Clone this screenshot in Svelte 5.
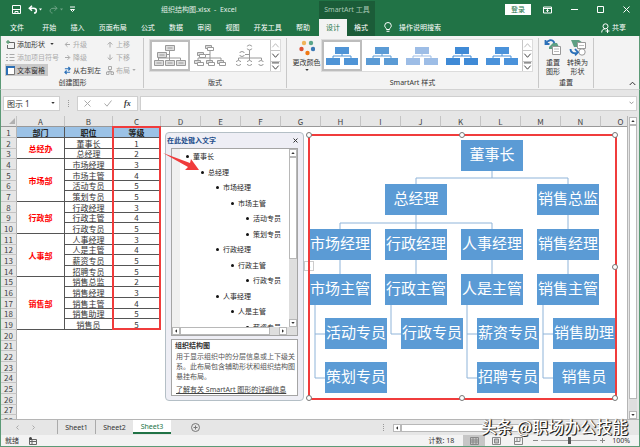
<script>
    const tabs = ["开始", "插入", "页面布局", "公式", "数据", "审阅", "视图", "开发工具", "帮助"];
    const letters = "DEFGHIJKLMNO".split("");
    const sheets = ["Sheet1", "Sheet2", "Sheet3"];
    let activeSheet = $state("Sheet3");
    let zoomLevel = $state(50);

    // Table data: department is set on the first row of each merged block
    const staff = [
        { dept: "总经办", span: 2, job: "董事长", level: 1 },
        { job: "总经理", level: 2 },
        { dept: "市场部", span: 4, job: "市场经理", level: 3 },
        { job: "市场主管", level: 4 },
        { job: "活动专员", level: 5 },
        { job: "策划专员", level: 5 },
        { dept: "行政部", span: 3, job: "行政经理", level: 3 },
        { job: "行政主管", level: 4 },
        { job: "行政专员", level: 5 },
        { dept: "人事部", span: 4, job: "人事经理", level: 3 },
        { job: "人是主管", level: 4 },
        { job: "薪资专员", level: 5 },
        { job: "招聘专员", level: 5 },
        { dept: "销售部", span: 5, job: "销售总监", level: 2 },
        { job: "销售经理", level: 3 },
        { job: "销售主管", level: 4 },
        { job: "销售助理", level: 5 },
        { job: "销售员", level: 5 },
    ];
    const emptyRows = [20, 21, 22, 23, 24, 25, 26, 27, 28];

    const outline = [
        [1, "董事长"],
        [2, "总经理"],
        [3, "市场经理"],
        [4, "市场主管"],
        [5, "活动专员"],
        [5, "策划专员"],
        [3, "行政经理"],
        [4, "行政主管"],
        [5, "行政专员"],
        [3, "人事经理"],
        [4, "人是主管"],
        [5, "薪资专员"],
    ];

    // Org chart nodes, x / y inside the drawing
    const nodes = [
        [153, 6, "董事长"],
        [77, 50, "总经理"],
        [229, 50, "销售总监"],
        [1, 95, "市场经理"],
        [77, 95, "行政经理"],
        [153, 95, "人事经理"],
        [229, 95, "销售经理"],
        [1, 140, "市场主管"],
        [77, 140, "行政主管"],
        [153, 140, "人是主管"],
        [229, 140, "销售主管"],
        [17, 184, "活动专员"],
        [93, 184, "行政专员"],
        [169, 184, "薪资专员"],
        [245, 184, "销售助理"],
        [17, 228, "策划专员"],
        [169, 228, "招聘专员"],
        [245, 228, "销售员"],
    ];
    const handles = [[1, 1], [154, 1], [307, 1], [307, 133], [1, 264], [154, 264], [307, 264]];
    const styles = ["#4f94d6", "#5b9bd5", "#9dbde6", "#3f8ad6", "#4a92da"];
</script>

{#snippet caret()}
    <svg class="caret" viewBox="0 0 5 3" aria-hidden="true"><path d="M0 0h5L2.5 3z" /></svg>
{/snippet}

{#snippet galleryScroll()}
    <div class="gallery-scroll">
        <button aria-label="上一行"><svg viewBox="0 0 10 10"><path class="dim" d="M1.500 7l3.500-4 3.500 4" /></svg></button>
        <button aria-label="下一行"><svg viewBox="0 0 10 10"><path d="M1.500 3l3.500 4 3.500-4" /></svg></button>
        <button aria-label="其他"><svg viewBox="0 0 10 10"><path d="M1 1h8M1.500 4l3.500 4 3.500-4" /></svg></button>
    </div>
{/snippet}

<div class="app">
    <header>
        <div class="title-left">
            <div class="quick">
                <button aria-label="保存">
                    <svg width="9" height="9" viewBox="0 0 9 9"><path d="M.5.5h8v8h-8zM.5 4.500h8M3 8.500v-2h3v2" /></svg>
                </button>
                <button aria-label="撤消">
                    <svg width="14" height="9" viewBox="0 0 14 9"><path stroke-width="1.500" d="M4 .8L1.300 3.300 4 5.800M1.300 3.300h4.200c4 0 3.500 4.700.5 4.700" /><path class="fill" d="M11 3.500h3L12.500 5.500z" /></svg>
                </button>
                <button class="off" aria-label="恢复">
                    <svg width="14" height="9" viewBox="0 0 14 9"><path d="M5.500.8L8 3.300 5.500 5.800M8 3.300H4c-4 0-3.500 4.700-.5 4.700" /><path class="fill" d="M11 3.500h3L12.500 5.500z" /></svg>
                </button>
                <button aria-label="自定义快速访问工具栏">
                    <svg width="5" height="7" viewBox="0 0 5 7"><path d="M0 1h5M.5 3.500h4L2.500 5.500z" /></svg>
                </button>
            </div>
            <h1>组织结构图.xlsx&nbsp; -&nbsp; Excel</h1>
        </div>
        <div class="context-title">SmartArt 工具</div>
        <div class="title-right">
            <button class="login">登录</button>
            <button aria-label="功能区显示选项"><svg width="9" height="8" viewBox="0 0 9 8"><path d="M.5 1h8v6h-8zM.5 2.500h8M4.500 6V3.500M3.300 4.700l1.200-1.200 1.200 1.200" /></svg></button>
            <button aria-label="最小化"><svg width="7" height="7" viewBox="0 0 7 7"><path d="M0 3.500h7" /></svg></button>
            <button aria-label="最大化"><svg width="7" height="7" viewBox="0 0 7 7"><path d="M.5.5h6v6h-6z" /></svg></button>
            <button aria-label="关闭"><svg width="7" height="7" viewBox="0 0 7 7"><path d="M.5.5l6 6M6.500.5l-6 6" /></svg></button>
        </div>
        <nav class="tabs">
            <button class="file">文件</button>
            {#each tabs as tab}
                <button>{tab}</button>
            {/each}
        </nav>
        <nav class="context-tabs">
            <button class="active">设计</button>
            <button>格式</button>
        </nav>
        <div class="tabs-right">
            <button>
                <svg width="8" height="11" viewBox="0 0 8 11"><path d="M2.500 7.500C2.500 6 .7 5.500.7 3.700a3.300 3.200 0 0 1 6.600 0C7.300 5.500 5.500 6 5.500 7.500zM2.500 9.300h3" /></svg>
                操作说明搜索
            </button>
            <button class="share">
                <svg width="9" height="10" viewBox="0 0 9 10"><circle cx="4.500" cy="3.300" r="2.500" /><path d="M.7 9.500c0-2.500 1.500-3.700 3.800-3.700M6.500 6v4M4.500 8h4" /></svg>
                共享
            </button>
        </div>
    </header>

    <section class="ribbon">
        <div class="group create">
            <div class="content">
                <div class="commands">
                    <button>
                        <svg width="9" height="9" viewBox="0 0 9 9"><path stroke="#666" d="M3 2.500h5.500v6h-7V5" /><path stroke="#3c8a5a" d="M2 0v4M0 2h4" /></svg>
                        添加形状 <span class="gap"></span>{@render caret()}
                    </button>
                    <button disabled>
                        <svg width="9" height="9" viewBox="0 0 9 9"><path stroke="#aaa" d="M0 1.500h2M0 4.500h2M0 7.500h2M3.500 1.500h5M3.500 4.500h5M3.500 7.500h5" /></svg>
                        添加项目符号
                    </button>
                    <button class="pressed">
                        <svg width="9" height="9" viewBox="0 0 9 9"><path fill="#fff" stroke="#777" d="M.5.5h8v8h-8z" /><path stroke="#2b6fb5" stroke-width="2" d="M0 1h9M1 1v8" /></svg>
                        文本窗格
                    </button>
                </div>
                <div class="commands">
                    <button disabled><svg width="7" height="7" viewBox="0 0 7 7"><path stroke="#aaa" d="M6 3.500H1.500M3.500 1.200L1.200 3.500l2.300 2.300" /></svg>升级</button>
                    <button disabled><svg width="7" height="7" viewBox="0 0 7 7"><path stroke="#aaa" d="M1 3.500h4.500M3.500 1.200l2.300 2.300-2.300 2.300" /></svg>降级</button>
                    <button><svg width="7" height="9" viewBox="0 0 8 9"><path stroke="#2b70b8" stroke-width="1.300" d="M1 2.500h6M5 .5l2 2-2 2M7 6.500H1M3 4.500l-2 2 2 2" /></svg>从右到左</button>
                </div>
                <div class="commands">
                    <button disabled><svg width="8" height="7" viewBox="0 0 8 7"><path stroke="#aaa" d="M4 6.500v-5M1.700 3.500L4 1.200l2.300 2.300" /></svg>上移</button>
                    <button disabled><svg width="8" height="7" viewBox="0 0 8 7"><path stroke="#aaa" d="M4 .5v5M1.700 3.500L4 5.800l2.300-2.300" /></svg>下移</button>
                    <button disabled><svg width="8" height="9" viewBox="0 0 8 9"><path stroke="#aaa" d="M2.500.5h3v3h-3zM4 3.500v2M1.500 5.500h5M.5 6h2.500v2.500H.5zM5 6h2.500v2.500H5z" /></svg>布局 {@render caret()}</button>
                </div>
            </div>
            <h2>创建图形</h2>
        </div>

        <div class="group">
            <div class="content">
                <div class="gallery">
                    <button class="item selected" aria-label="组织结构图">
                        <svg viewBox="0 0 40 32"><path d="M19.500 10v10M16 14.500h3.500M8.500 20v-2h22v2" /><g class="gray"><path d="M15.500 5.500h9v5h-9zM7.500 12.500h9v5h-9zM4.500 20.500h9v5h-9zM15.500 20.500h9v5h-9zM26.500 20.500h9v5h-9z" /></g><path d="M17.500 8h5M9.500 15h5M6.500 23h5M17.500 23h5M28.500 23h5" /></svg>
                    </button>
                    <button class="item" aria-label="姓名和职务组织结构图">
                        <svg viewBox="0 0 40 32"><path d="M20 10v10M16 14.500h4M8 20v-2h23v2" /><g class="gray"><path d="M15.500 5.500h6v3h-6zM7.500 12.500h6v3h-6zM4.500 20.500h6v3h-6zM16.500 20.500h6v3h-6zM27.500 20.500h6v3h-6z" /></g><g class="white"><path d="M17.500 7.500h6v3h-6zM9.500 14.500h6v3h-6zM7.500 22.500h6v3h-6zM18.500 22.500h6v3h-6zM29.500 22.500h6v3h-6z" /></g></svg>
                    </button>
                    <button class="item" aria-label="半圆组织结构图">
                        <svg viewBox="0 0 40 32"><path d="M19.500 10v10M14 14.500h5.500M8.500 20v-2h23v2" /><g class="white"><circle cx="19.500" cy="7.500" r="2.500" /><circle cx="12" cy="14" r="2.500" /><circle cx="8.500" cy="23" r="2.500" /><circle cx="19.500" cy="23" r="2.500" /><circle cx="31" cy="23" r="2.500" /></g><path class="wipe" d="M16 7.500h7M9 14h6M5 23h7M16 23h7M27 23h7" /></svg>
                    </button>
                    {@render galleryScroll()}
                </div>
            </div>
            <h2>版式</h2>
        </div>

        <div class="group">
            <div class="content">
                <button class="big colors">
                    <svg width="16" height="16" viewBox="0 0 16 16"><circle cx="5" cy="3" r="2.200" fill="#f0b45a" /><circle cx="12" cy="3" r="2.200" fill="#5aa58a" /><circle cx="2.500" cy="9" r="2.200" fill="#dc5032" /><circle cx="14" cy="9" r="2.200" fill="#3c78b4" /><circle cx="8.500" cy="13" r="2.200" fill="#f07814" /></svg>
                    <span>更改颜色</span>
                    {@render caret()}
                </button>
                <div class="gallery">
                    {#each styles as color, i}
                        <button class="item" class:selected={i == 0} aria-label="样式 {i + 1}">
                            <svg viewBox="0 0 40 32"><path stroke={color} d="M20 14v2M11 18v-2h18v2" /><path fill={color} d="M13 7h14v7H13zM4 18h14v7H4zM22 18h14v7H22z" /></svg>
                        </button>
                    {/each}
                    {@render galleryScroll()}
                </div>
            </div>
            <h2>SmartArt 样式</h2>
        </div>

        <div class="group">
            <div class="content reset">
                <button class="big">
                    <svg width="18" height="17" viewBox="0 0 18 17"><path fill="#5fa083" d="M5 8l4-4h4l3 6H5z" /><path fill="#fff" stroke="#999" d="M8.500 7.500h8v8h-8z" /><path stroke="#bbb" d="M10 10h5M10 12.500h5" /><path stroke="#2b70b8" stroke-width="1.800" d="M1.500 1v4h4M2 4.500C4 1 8-.5 10.500 4" /></svg>
                    <span>重置<br />图形</span>
                </button>
                <button class="big">
                    <svg width="18" height="17" viewBox="0 0 18 17"><path fill="#5fa083" d="M2 1h8l4 3-5 4H5z" /><path fill="#fff" stroke="#999" d="M8.500 3.500h8v6h-8z" /><path stroke="#bbb" d="M10 6.500h5" /><circle cx="13" cy="13" r="3.200" fill="#fff" stroke="#999" /><path stroke="#2b70b8" stroke-width="1.800" d="M1.500 10c0 4 4 5 7 3.500M6 10l3 3.300L6 16.300" /></svg>
                    <span>转换为<br />形状</span>
                </button>
            </div>
            <h2>重置</h2>
        </div>
        <button class="collapse" aria-label="折叠功能区"><svg width="7" height="5" viewBox="0 0 7 5"><path d="M.7 4l2.800-2.800L6.300 4" /></svg></button>
    </section>

    <section class="formula">
        <div class="name-box">
            <select aria-label="名称框"><option>图示 1</option></select>
            {@render caret()}
        </div>
        <span class="dots"></span>
        <div class="fx">
            <button aria-label="取消"><svg width="7" height="7" viewBox="0 0 7 7"><path stroke="#aaa" d="M.5.5l6 6M6.500.5l-6 6" /></svg></button>
            <button aria-label="输入"><svg width="8" height="7" viewBox="0 0 8 7"><path stroke="#aaa" d="M.5 3.500l2.500 2.700L7.500.5" /></svg></button>
            <button class="fn"><i>fx</i></button>
        </div>
        <div class="formula-input">
            <input type="text" aria-label="编辑栏" />
            <svg width="5" height="4" viewBox="0 0 5 4"><path d="M.5.7l2 2 2-2" /></svg>
        </div>
    </section>

    <main>
        <div class="sheet">
            <table>
                <colgroup>
                    <col class="num" />
                    <col class="wide" /><col class="wide" /><col class="wide" />
                    {#each letters as letter}<col class="narrow" />{/each}
                </colgroup>
                <thead>
                    <tr>
                        <th class="corner"><svg width="6" height="6" viewBox="0 0 6 6"><path d="M6 0v6H0z" /></svg></th>
                        <th>A</th><th>B</th><th>C</th>
                        {#each letters as letter}<th>{letter}</th>{/each}
                    </tr>
                </thead>
                <tbody>
                    <tr class="head">
                        <th>1</th><td>部门</td><td>职位</td><td>等级</td>
                    </tr>
                    {#each staff as row, i}
                        <tr>
                            <th>{i + 2}</th>
                            {#if row.dept}<td class="dept" rowspan={row.span}>{row.dept}</td>{/if}
                            <td>{row.job}</td>
                            <td>{row.level}</td>
                        </tr>
                    {/each}
                    {#each emptyRows as n}
                        <tr><th>{n}</th></tr>
                    {/each}
                </tbody>
            </table>

            <div class="mark"></div>

            <aside class="pane">
                <div class="pane-title">
                    <h3>在此处键入文字</h3>
                    <button aria-label="关闭窗格"><svg width="5" height="5" viewBox="0 0 5 5"><path d="M.5.5l4 4M4.500.5l-4 4" /></svg></button>
                </div>
                <div class="tree">
                    <div class="tree-body">
                        <ul>
                            {#each outline as [level, name]}
                                <li class="l{level}">{name}</li>
                            {/each}
                        </ul>
                        <div class="vbar">
                            <button aria-label="向上">{@render caret()}</button>
                            <span class="thumb"></span>
                            <button class="down" aria-label="向下">{@render caret()}</button>
                        </div>
                    </div>
                    <div class="hbar">
                        <button class="left" aria-label="向左">{@render caret()}</button>
                        <span class="thumb"></span>
                        <button class="right" aria-label="向右">{@render caret()}</button>
                    </div>
                </div>
                <div class="about">
                    <h4>组织结构图</h4>
                    <p>用于显示组织中的分层信息或上下级关系。此布局包含辅助形状和组织结构图悬挂布局。</p>
                    <a href="#smartart">了解有关 SmartArt 图形的详细信息</a>
                </div>
            </aside>

            <svg class="arrow" width="38" height="22" viewBox="0 0 38 22"><path d="M1 2l27 10 1-4 8 11-14 0 3-3z" /></svg>

            <button class="toggle" aria-label="文本窗格开关">›</button>
            <div class="chart">
                <svg class="lines" width="309" height="266" viewBox="0 0 309 266">
                    <path d="M184 37v7M108 50v-6h152v6M108 81v14M32 95v-6h152v6M260 81v14M32 126v14M108 126v14M184 126v14M260 126v14M7 171v73h10M7 200h10M83 171v29h10M159 171v73h10M159 200h10M235 171v73h10M235 200h10" />
                </svg>
                {#each nodes as [x, y, name]}
                    <div class="node" style="left: {x}px; top: {y}px">{name}</div>
                {/each}
                <div class="frame"></div>
                <svg class="lines handles" width="309" height="266" viewBox="0 0 309 266">
                    {#each handles as [x, y]}<circle cx={x} cy={y} r="2.500" />{/each}
                </svg>
            </div>
        </div>
        <div class="vbar main-bar">
            <button aria-label="向上滚动">{@render caret()}</button>
            <span class="thumb"></span>
            <button class="down" aria-label="向下滚动">{@render caret()}</button>
        </div>
    </main>

    <footer>
        <div class="sheet-tabs">
            <div class="sheet-nav">
                <button aria-label="上一张"><svg width="3" height="5" viewBox="0 0 3 5"><path d="M2.500.5l-2 2 2 2" /></svg></button>
                <button aria-label="下一张"><svg width="3" height="5" viewBox="0 0 3 5"><path d="M.5.5l2 2-2 2" /></svg></button>
            </div>
            {#each sheets as sheet}
                <button class="sheet-tab" class:current={sheet == activeSheet} onclick={() => (activeSheet = sheet)}>{sheet}</button>
            {/each}
            <button class="add" aria-label="新工作表"><svg width="9" height="9" viewBox="0 0 9 9"><circle cx="4.500" cy="4.500" r="4" /><path d="M4.500 2.500v4M2.500 4.500h4" /></svg></button>
            <span class="dots"></span>
            <div class="hbar">
                <button class="left" aria-label="向左滚动">{@render caret()}</button>
                <span class="thumb"></span>
                <button class="right" aria-label="向右滚动">{@render caret()}</button>
            </div>
        </div>
        <div class="status">
            <span>就绪</span>
            <svg width="8" height="8" viewBox="0 0 8 8"><path stroke="#666" d="M.5 2.500h7v5h-7zM.5 4.500h7M3 2.500v5" /><circle cx="1.500" cy="1.500" r="1.500" fill="#444" stroke="none" /></svg>
            <span class="count">计数: 18</span>
            <div class="views">
                <button class="on" aria-label="普通"><svg width="9" height="8" viewBox="0 0 9 8"><path d="M.5.5h8v7h-8zM.5 3h8M.5 5h8M3 .5v7M6 .5v7" /></svg></button>
                <button aria-label="页面布局视图"><svg width="9" height="8" viewBox="0 0 9 8"><path d="M.5.5h8v7h-8zM2.500 2v4h4V2zM3 3h3M3 5h3" /></svg></button>
                <button aria-label="分页预览"><svg width="9" height="8" viewBox="0 0 9 8"><path d="M.5.5h8v7h-8zM3 .5v4h3v-4M.5 4.500H3" /></svg></button>
            </div>
            <button class="step" aria-label="缩小"><svg width="5" height="5" viewBox="0 0 5 5"><path d="M0 2.500h5" /></svg></button>
            <input type="range" aria-label="显示比例" min="0" max="100" bind:value={zoomLevel} />
            <button class="step" aria-label="放大"><svg width="5" height="5" viewBox="0 0 5 5"><path d="M0 2.500h5M2.500 0v5" /></svg></button>
            <span class="percent">100%</span>
        </div>
        <div class="watermark">头条 @职场办公技能</div>
    </footer>
</div>

<style>
    :global(body) {
        background: #fff;
    }

    .app,
    .app * {
        box-sizing: border-box;
    }

    .app {
        height: 100vh;
        display: flex;
        flex-direction: column;
        overflow: hidden;
        font-family: "Noto Sans", "Noto Sans CJK SC", sans-serif;
        font-size: 7px;
        line-height: 9px;
        color: #333;
    }

    button,
    input,
    select {
        font: inherit;
        color: inherit;
        background: none;
        border: 0;
        padding: 0;
        margin: 0;
        border-radius: 0;
    }

    button {
        display: flex;
        align-items: center;
        justify-content: center;
        white-space: nowrap;
    }

    h1, h2, h3, h4, p, ul {
        margin: 0;
        padding: 0;
        font-size: 7px;
        font-weight: normal;
    }

    svg {
        display: block;
        flex: none;
        fill: none;
        stroke: currentColor;
    }

    .caret {
        width: 4px;
        height: 2px;
        fill: currentColor;
        stroke: none;
    }

    /* Title bar and tabs */
    header {
        flex: none;
        display: grid;
        grid-template-columns: 319px 56px 1fr;
        grid-template-rows: 19px 17px;
        background: #217346;
        color: #fff;
    }

    .title-left,
    .title-right,
    .tabs-right,
    .quick {
        display: flex;
        align-items: center;
    }

    .title-left {
        padding-left: 12px;
    }

    .quick {
        gap: 7px;
    }

    .quick .fill {
        fill: #fff;
        stroke: none;
    }

    .quick .off {
        opacity: 0.35;
    }

    h1 {
        margin-left: 86px;
        color: #e3eee7;
    }

    .context-title {
        margin-top: 1px;
        background: #1b5c38;
        color: #a9c9b6;
        line-height: 18px;
        text-align: center;
    }

    .title-right {
        justify-content: flex-end;
        gap: 19px;
        padding-right: 10px;
    }

    .login {
        width: 26px;
        height: 11px;
        margin-right: -7px;
        background: #fff;
        color: #217346;
    }

    .tabs {
        display: flex;
        justify-content: space-between;
        padding: 0 9px 0 10px;
    }

    .file {
        margin-right: 4px;
    }

    .context-tabs {
        display: grid;
        grid-template-columns: 1fr 1fr;
        background: #1b5c38;
    }

    .context-tabs .active {
        background: #f3f3f3;
        color: #217346;
    }

    .tabs-right {
        justify-content: space-between;
        padding: 0 14px 0 9px;
    }

    .tabs-right button {
        gap: 7px;
    }

    .tabs-right .share {
        gap: 2px;
    }

    /* Ribbon */
    .ribbon {
        flex: none;
        display: flex;
        height: 54px;
        padding: 2px 3px 1px 0;
        background: #f3f3f3;
        border: solid #5c9a76;
        border-width: 0 1px;
        border-bottom: 1px solid #d2d2d2;
    }

    .group {
        display: flex;
        flex-direction: column;
        justify-content: space-between;
        padding: 1px 5px 0;
        border-right: 1px solid #c8c8c8;
    }

    .content {
        display: flex;
        height: 37px;
    }

    h2 {
        text-align: center;
        line-height: 10px;
    }

    .create {
        width: 143px;
        padding: 0 3px 0 4px;
    }

    .create .content {
        gap: 4px;
    }

    .commands {
        display: grid;
        grid-template-rows: repeat(3, 12px);
        row-gap: 1px;
    }

    .commands button {
        justify-content: flex-start;
        gap: 2px;
        padding-left: 1px;
    }

    .commands button:disabled {
        color: #ababab;
    }

    .commands .pressed {
        width: 43px;
        background: #c9c9c9;
    }

    .gap {
        width: 1px;
    }

    .gallery {
        display: flex;
        height: 33px;
        background: #fff;
        border: 1px solid #dcdcdc;
    }

    .item {
        width: 40px;
        border: 2px solid transparent;
        overflow: hidden;
    }

    .item.selected {
        border-color: #bdbdbd;
    }

    .item svg {
        width: 40px;
        height: 32px;
        stroke: none;
    }

    .item svg > path:not([fill], [stroke]) {
        stroke: #999;
    }

    .item .gray {
        fill: #ddd;
        stroke: #999;
    }

    .item .white {
        fill: #fff;
        stroke: #999;
    }

    .item svg > path.wipe:not([fill], [stroke]) {
        stroke: #fff;
        stroke-width: 2;
    }

    .gallery-scroll {
        width: 10px;
        display: grid;
        grid-template-rows: repeat(3, 1fr);
        border-left: 1px solid #c6c6c6;
    }

    .gallery-scroll button + button {
        border-top: 1px solid #c6c6c6;
    }

    .gallery-scroll svg {
        width: 9px;
        height: 9px;
    }

    .dim {
        stroke: #b5b5b5;
    }

    .big {
        flex-direction: column;
        justify-content: flex-start;
        gap: 2px;
        line-height: 9px;
    }

    .big svg [fill]:not([stroke]) {
        stroke: none;
    }

    .colors {
        width: 29px;
        padding-top: 1px;
    }

    .reset {
        gap: 5px;
    }

    .collapse {
        margin: 0 0 2px auto;
        align-self: flex-end;
    }

    /* Name box and formula bar */
    .formula {
        flex: none;
        display: flex;
        align-items: center;
        height: 26px;
        padding: 0 2px;
        background: #e6e6e6;
        border: solid #5c9a76;
        border-width: 0 1px;
    }

    .name-box,
    .fx,
    .formula-input {
        display: flex;
        align-items: center;
        height: 15px;
        background: #fff;
        border: 1px solid #cfcfcf;
    }

    .name-box {
        width: 57px;
        padding: 0 4px 0 3px;
    }

    .name-box select {
        flex: 1;
        appearance: none;
        font-size: 8px;
    }

    .dots {
        width: 1px;
        height: 7px;
        border-left: 1px dotted #999;
    }

    .formula .dots {
        margin: 0 8px;
    }

    .fx {
        width: 61px;
        justify-content: space-around;
    }

    .fn {
        font-family: "Liberation Serif", serif;
        font-size: 8px;
        font-weight: bold;
    }

    .formula-input {
        flex: 1;
        margin-left: 2px;
        padding-right: 2px;
        color: #999;
    }

    .formula-input input {
        flex: 1;
    }

    /* Sheet */
    main {
        flex: 1;
        min-height: 0;
        display: flex;
        background: #e6e6e6;
        border: solid #5c9a76;
        border-width: 0 1px;
    }

    .sheet {
        flex: 1;
        position: relative;
        overflow: hidden;
        background: #fff;
        border-right: 1px solid #b5b5b5;
    }

    table {
        width: 640px;
        table-layout: fixed;
        border-collapse: separate;
        border-spacing: 0;
        font-family: "Noto Sans CJK SC", sans-serif;
        font-size: 8px;
        line-height: 9px;
        text-align: center;
    }

    .num {
        width: 16px;
    }

    .wide {
        width: 48px;
    }

    .narrow {
        width: 40px;
    }

    tr {
        height: 11px;
    }

    tbody tr:nth-child(3n) {
        height: 10px;
    }

    th,
    td {
        padding: 0;
        white-space: nowrap;
    }

    th {
        font-weight: normal;
        color: #444;
        background: #e6e6e6;
        border-right: 1px solid #b5b5b5;
        border-bottom: 1px solid #c4c4c4;
    }

    thead th {
        border-right-color: #c4c4c4;
        border-bottom-color: #999;
    }

    .corner svg {
        margin-left: 8px;
        fill: #b0b0b0;
        stroke: none;
    }

    td {
        border-right: 1px solid #555;
        border-bottom: 1px solid #555;
    }

    .head td {
        background: #9bc2e6;
        font-weight: bold;
        color: #222;
    }

    .dept {
        color: #f00;
        font-weight: bold;
    }

    .mark {
        position: absolute;
        left: 111px;
        top: 10px;
        width: 49px;
        height: 204px;
        border: 2px solid #f03c3c;
    }

    /* Text pane */
    .pane {
        position: absolute;
        left: 164px;
        top: 16px;
        width: 139px;
        height: 269px;
        display: flex;
        flex-direction: column;
        gap: 3px;
        padding: 3px 5px 4px;
        background: #eeeef5;
        border: 1px solid #b4bfc6;
        border-radius: 4px;
    }

    .pane-title {
        display: flex;
        justify-content: space-between;
        height: 10px;
        margin: 0 0 0 -4px;
    }

    h3 {
        color: #1f4e8c;
        font-weight: bold;
    }

    .tree {
        height: 188px;
        display: flex;
        flex-direction: column;
        background: #fff;
        border: 1px solid #a5a5a5;
    }

    .tree-body {
        flex: 1;
        min-height: 0;
        display: flex;
    }

    ul {
        flex: 1;
        overflow: hidden;
        list-style: none;
        border-left: 8px solid #f0f0f0;
        color: #222;
    }

    li {
        height: 16px;
        line-height: 16px;
    }

    li:nth-child(2n) {
        height: 15px;
    }

    li::before {
        content: "";
        display: inline-block;
        width: 3px;
        height: 3px;
        margin-right: 4px;
        border-radius: 50%;
        background: #111;
        vertical-align: 1px;
    }

    .l1 { padding-left: 6px; }
    .l2 { padding-left: 21px; }
    .l3 { padding-left: 36px; }
    .l4 { padding-left: 51px; }
    .l5 { padding-left: 66px; }

    .vbar {
        width: 8px;
        display: flex;
        flex-direction: column;
        background: #dedede;
    }

    .hbar {
        height: 8px;
        display: flex;
        background: #dedede;
    }

    .vbar button,
    .vbar .thumb,
    .hbar button,
    .hbar .thumb {
        flex: none;
        width: 8px;
        height: 8px;
        background: #fff;
        border: 1px solid #b8b8b8;
    }

    .vbar .thumb {
        flex: 0 1 102px;
    }

    .vbar button:first-child .caret {
        transform: rotate(180deg);
    }

    .vbar .down {
        margin-top: auto;
    }

    .hbar .thumb {
        width: 90px;
    }

    .left .caret {
        transform: rotate(90deg);
    }

    .right .caret {
        transform: rotate(-90deg);
    }

    .tree .right {
        margin-left: 9px;
    }

    .about {
        flex: 1;
        padding: 1px 3px;
        background: #fff;
        border: 1px solid #a5a5a5;
    }

    h4 {
        font-weight: bold;
    }

    .about p {
        width: 121px;
        margin: 2px 0 3px 1px;
        line-height: 10px;
        color: #555;
    }

    .about a {
        margin-left: 1px;
        color: #444;
    }

    .arrow {
        position: absolute;
        left: 161px;
        top: 35px;
        fill: #f03c3c;
        stroke: none;
    }

    .toggle {
        position: absolute;
        left: 303px;
        top: 145px;
        width: 10px;
        height: 10px;
        border: 1px solid #ccc;
        background: #fff;
    }

    /* Org chart */
    .chart {
        position: absolute;
        left: 307px;
        top: 18px;
        width: 309px;
        height: 266px;
    }

    .lines {
        position: absolute;
        left: 0;
        top: 0;
        stroke: #8fb4d9;
    }

    .handles {
        overflow: visible;
        fill: #fff;
        stroke: #777;
    }

    .node {
        position: absolute;
        width: 62px;
        height: 31px;
        background: #5b9bd5;
        color: #fff;
        font-family: "Noto Sans CJK SC", sans-serif;
        font-size: 15px;
        line-height: 28px;
        text-align: center;
        white-space: nowrap;
    }

    .frame {
        position: absolute;
        inset: 0;
        border: 2px solid #f03c3c;
    }

    .main-bar {
        margin: 1px 2px 0 1px;
    }

    .main-bar .thumb {
        flex: 0 1 274px;
    }

    /* Sheet tabs and status bar */
    footer {
        flex: none;
        position: relative;
        border: 1px solid #5c9a76;
        border-top: 0;
    }

    .sheet-tabs {
        display: flex;
        align-items: center;
        height: 16px;
        padding-right: 12px;
        background: #e6e6e6;
        border-top: 1px solid #b5b5b5;
    }

    .sheet-nav {
        display: flex;
        justify-content: center;
        gap: 13px;
        width: 56px;
        padding-right: 8px;
        color: #aaa;
    }

    .sheet-tab {
        width: 38px;
        height: 14px;
        align-self: flex-start;
        border-left: 1px solid #aaa;
    }

    .sheet-tab.current {
        background: #fff;
        color: #217346;
        border-left: 0;
        border-bottom: 2px solid #217346;
    }

    .add {
        margin: 0 auto 0 20px;
        color: #777;
    }

    .sheet-tabs .hbar {
        flex: 0 0 234px;
        margin-left: 9px;
    }

    .sheet-tabs .thumb {
        width: 160px;
    }

    .sheet-tabs .right {
        margin-left: auto;
    }

    .status {
        display: flex;
        align-items: center;
        height: 11px;
        padding: 0 9px 0 4px;
        background: #f3f3f3;
    }

    .status > svg {
        margin-left: 10px;
    }

    .count {
        margin: 0 9px 0 auto;
    }

    .views {
        display: flex;
        height: 11px;
        margin-right: 4px;
    }

    .views button {
        width: 22px;
        color: #888;
    }

    .views .on {
        background: #c6c6c6;
    }

    .step {
        color: #888;
    }

    input[type="range"] {
        appearance: none;
        width: 56px;
        height: 7px;
        margin: 0 3px;
        background: linear-gradient(#aaa, #aaa) center / 100% 1px no-repeat;
    }

    input[type="range"]::-webkit-slider-thumb {
        appearance: none;
        width: 3px;
        height: 7px;
        background: #555;
    }

    .percent {
        margin-left: 7px;
    }

    .watermark {
        position: absolute;
        right: 11px;
        top: -2px;
        font-family: "Noto Sans CJK SC", sans-serif;
        font-size: 16px;
        font-weight: 500;
        line-height: 18px;
        color: #fff;
        text-shadow: 1px 1px 0 #222, 1px 0 1px #333;
    }
</style>
